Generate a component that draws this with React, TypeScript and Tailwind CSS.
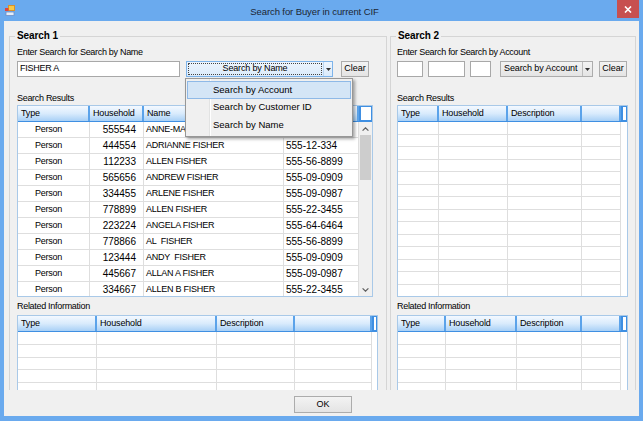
import React from "react";

type Col = { w: string; label: string; cell?: string };

const resultCols: Col[] = [
  { w: "w-[72px]", label: "Type", cell: "pl-[17px]" },
  { w: "w-[54px]", label: "Household", cell: "justify-end pr-[7px] text-[10px] tracking-normal" },
  { w: "w-[140px]", label: "Name", cell: "pl-[2px]" },
  { w: "w-[75px]", label: "", cell: "pl-[2px] text-[10px] tracking-normal" },
];

const result2Cols: Col[] = [
  { w: "w-[41px]", label: "Type" },
  { w: "w-[69px]", label: "Household" },
  { w: "w-[74px]", label: "Description" },
  { w: "w-[39px]", label: "" },
];

const relatedLeftCols: Col[] = [
  { w: "w-[79px]", label: "Type" },
  { w: "w-[120px]", label: "Household" },
  { w: "w-[78px]", label: "Description" },
  { w: "w-[77px]", label: "" },
];

const relatedRightCols: Col[] = [
  { w: "w-[48px]", label: "Type" },
  { w: "w-[71px]", label: "Household" },
  { w: "w-[65px]", label: "Description" },
  { w: "w-[39px]", label: "" },
];

// first row is mostly hidden behind the open drop-down
const people: string[][] = [
  ["Person", "555544", "ANNE-MA", ""],
  ["Person", "444554", "ADRIANNE FISHER", "555-12-334"],
  ["Person", "112233", "ALLEN FISHER", "555-56-8899"],
  ["Person", "565656", "ANDREW FISHER", "555-09-0909"],
  ["Person", "334455", "ARLENE FISHER", "555-09-0987"],
  ["Person", "778899", "ALLEN FISHER", "555-22-3455"],
  ["Person", "223224", "ANGELA FISHER", "555-64-6464"],
  ["Person", "778866", "AL  FISHER", "555-56-8899"],
  ["Person", "123444", "ANDY  FISHER", "555-09-0909"],
  ["Person", "445667", "ALLAN A FISHER", "555-09-0987"],
  ["Person", "334667", "ALLEN B FISHER", "555-22-3455"],
];

const blank = (n: number) => Array.from({ length: n }, () => ["", "", "", ""]);

function Header({ cols, box }: { cols: Col[]; box: string }) {
  return (
    <div className="flex h-[16px] shrink-0 border-b border-[#3f8fe2] bg-gradient-to-b from-[#f4f9ff] via-[#d9ebfc] to-[#a8d0f6]">
      {cols.map((c, i) => (
        <div
          key={i}
          className={`${c.w} flex items-center whitespace-nowrap border-r-2 border-[#5ba3ea] pl-[3px] text-[9px] tracking-[-0.15px]`}
        >
          {c.label}
        </div>
      ))}
      <div className={`${box} border border-l-2 border-[#3f8fe2] bg-white`} />
    </div>
  );
}

function ScrollBar() {
  return (
    <div className="flex w-[13px] flex-col bg-[#f0f0f0]">
      <div className="flex h-[13px] shrink-0 items-center justify-center">
        <svg width="7" height="4" viewBox="0 0 7 4">
          <path d="M0.6 3.6L3.5 0.8L6.4 3.6" stroke="#606060" strokeWidth="1.2" fill="none" />
        </svg>
      </div>
      <div className="mx-px h-[45px] shrink-0 bg-[#cdcdcd]" />
      <div className="flex-1" />
      <div className="flex h-[13px] shrink-0 items-center justify-center">
        <svg width="7" height="4" viewBox="0 0 7 4">
          <path d="M0.6 0.4L3.5 3.2L6.4 0.4" stroke="#606060" strokeWidth="1.2" fill="none" />
        </svg>
      </div>
    </div>
  );
}

function Grid({
  cols,
  box,
  rows,
  rowH,
  size,
  scroll,
}: {
  cols: Col[];
  box: string;
  rows: string[][];
  rowH: string;
  size: string;
  scroll?: boolean;
}) {
  return (
    <div className={`${size} flex shrink-0 flex-col overflow-hidden border border-[#a9c9e8] bg-white`}>
      <Header cols={cols} box={box} />
      <div className="flex min-h-0 flex-1">
        <div className="flex flex-col">
          {rows.map((r, i) => (
            <div
              key={i}
              className={`${rowH} flex shrink-0 border-b border-[#dedede] text-[9px] tracking-[-0.25px]`}
            >
              {cols.map((c, j) => (
                <div
                  key={j}
                  className={`${c.w} ${c.cell ?? ""} flex items-center overflow-hidden whitespace-pre border-r border-[#dedede]`}
                >
                  {r[j]}
                </div>
              ))}
            </div>
          ))}
        </div>
        {scroll ? <ScrollBar /> : <div className="flex-1" />}
      </div>
    </div>
  );
}

function Label({ children }: { children: React.ReactNode }) {
  return <div className="h-[11px] whitespace-nowrap text-[9px] leading-[11px] tracking-[-0.3px]">{children}</div>;
}

function TextBox({ w, children }: { w: string; children?: React.ReactNode }) {
  return (
    <div className={`${w} flex h-[16px] items-center border border-[#a8a8a8] bg-white pl-[2px] text-[9px] tracking-[-0.25px]`}>
      {children}
    </div>
  );
}

function Button({ w, children }: { w: string; children: React.ReactNode }) {
  return (
    <div
      className={`${w} flex items-center justify-center border border-[#acacac] bg-gradient-to-b from-[#f3f3f3] to-[#e4e4e4] text-[9px]`}
    >
      {children}
    </div>
  );
}

function DownArrow() {
  return (
    <svg width="5" height="3" viewBox="0 0 5 3">
      <path d="M0 0h5L2.5 3z" fill="#333" />
    </svg>
  );
}

function Group({ title, w, pad, children }: { title: string; w: string; pad: string; children: React.ReactNode }) {
  return (
    <fieldset className={`${w} m-0 h-[362px] min-w-0 shrink-0 border border-b-0 border-[#d5d5d5] p-0`}>
      <legend className="ml-[5px] px-[2px] text-[10px] font-bold leading-[12px] tracking-[-0.1px]">{title}</legend>
      <div className={`${pad} flex flex-col`}>{children}</div>
    </fieldset>
  );
}

export default function App() {
  return (
    <div className="flex h-[421px] w-[643px] flex-col bg-[#6aaaee] font-['Liberation_Sans',Arial,sans-serif] text-black">
      {/* Title bar */}
      <div className="flex h-[21px] shrink-0 items-start">
        <div className="w-[20px] pl-[5px] pt-[5px]">
          <svg width="10" height="11" viewBox="0 0 10 11">
            <rect x="3.5" y="0.5" width="6" height="5" fill="#f7c948" stroke="#d9912b" />
            <rect x="0" y="3" width="3.5" height="3" fill="#e0463c" />
            <rect x="1" y="7" width="8" height="3.5" fill="#e4edf8" stroke="#6c8fc7" strokeWidth="0.8" />
          </svg>
        </div>
        <div className="flex-1 whitespace-nowrap pr-[8px] pt-[6px] text-center text-[9.5px] leading-[12px] tracking-[-0.1px] text-[#1c2633]">
          Search for Buyer in current CIF
        </div>
        <div className="mr-[4px] flex h-[18px] w-[22px] items-center justify-center bg-[#c75050]">
          <svg width="8" height="7" viewBox="0 0 8 7">
            <path d="M1 0.5L7 6.5M7 0.5L1 6.5" stroke="white" strokeWidth="1.6" />
          </svg>
        </div>
      </div>

      {/* Client area */}
      <div className="mx-[4px] mb-[5px] flex flex-1 flex-col bg-[#f0f0f0]">
        <div className="flex h-[369px] shrink-0 items-start gap-[3px] overflow-hidden pl-[5px] pt-[9px]">
          {/* Search 1 */}
          <Group title="Search 1" w="w-[378px]" pad="pl-[7px]">
            <div className="mt-[5px]">
              <Label>Enter Search for Search by Name</Label>
            </div>
            <div className="mt-[3px] flex h-[16px] items-stretch">
              <TextBox w="w-[163px]">FISHER A</TextBox>
              <div className="relative ml-[6px] flex w-[147px] border border-[#7eb4ea] bg-gradient-to-b from-[#eef5fd] to-[#dbebfb]">
                <div className="m-px flex flex-1 items-center justify-center border border-dotted border-[#444] text-[9px] tracking-[-0.15px]">
                  Search by Name
                </div>
                <div className="flex w-[9px] items-center justify-center border-l border-[#b9d6f3]">
                  <DownArrow />
                </div>
                {/* open list */}
                <div className="absolute left-[-2px] top-[16px] z-10 w-[168px] border border-[#979797] bg-[#f0f0f0] px-px py-[2px] text-[9.5px] shadow-[2px_2px_3px_rgba(0,0,0,0.35)]">
                  <div className="absolute bottom-0 left-[23px] top-0 w-px bg-[#e2e3e3]" />
                  <div className="absolute bottom-0 left-[24px] top-0 w-px bg-white" />
                  <div className="relative flex h-[17.5px] items-center whitespace-nowrap border border-[#8fb9e7] bg-[#d4e5f6] pl-[25px]">
                    Search by Account
                  </div>
                  <div className="relative flex h-[17.5px] items-center whitespace-nowrap border border-transparent pl-[25px]">
                    Search by Customer ID
                  </div>
                  <div className="relative flex h-[17.5px] items-center whitespace-nowrap border border-transparent pl-[25px]">
                    Search by Name
                  </div>
                </div>
              </div>
              <div className="ml-[8px] flex">
                <Button w="w-[28px]">Clear</Button>
              </div>
            </div>
            <div className="mt-[16px]">
              <Label>Search Results</Label>
            </div>
            <div className="mt-[1px]">
              <Grid cols={resultCols} box="w-[13px]" rows={people} rowH="h-[16px]" size="w-[356px] h-[192px]" scroll />
            </div>
            <div className="mt-[4px]">
              <Label>Related Information</Label>
            </div>
            <div className="mt-[3px]">
              <Grid cols={relatedLeftCols} box="w-[5px]" rows={blank(7)} rowH="h-[12.75px]" size="w-[361px] h-[100px]" />
            </div>
          </Group>

          {/* Search 2 */}
          <Group title="Search 2" w="w-[246px]" pad="pl-[6px]">
            <div className="mt-[5px]">
              <Label>Enter Search for Search by Account</Label>
            </div>
            <div className="mt-[3px] flex h-[16px] items-stretch">
              <TextBox w="w-[26px]" />
              <div className="ml-[5px] flex">
                <TextBox w="w-[37px]" />
              </div>
              <div className="ml-[5px] flex">
                <TextBox w="w-[21px]" />
              </div>
              <div className="ml-[9px] flex w-[93px] border border-[#acacac] bg-gradient-to-b from-[#f3f3f3] to-[#e4e4e4]">
                <div className="flex flex-1 items-center whitespace-nowrap pl-[3px] text-[9px] tracking-[-0.1px]">
                  Search by Account
                </div>
                <div className="flex w-[10px] items-center justify-center border-l border-[#bcbcbc]">
                  <DownArrow />
                </div>
              </div>
              <div className="ml-[6px] flex">
                <Button w="w-[28px]">Clear</Button>
              </div>
            </div>
            <div className="mt-[16px]">
              <Label>Search Results</Label>
            </div>
            <div className="mt-[1px]">
              <Grid cols={result2Cols} box="w-[6px]" rows={blank(15)} rowH="h-[12.5px]" size="w-[231px] h-[192px]" />
            </div>
            <div className="mt-[4px]">
              <Label>Related Information</Label>
            </div>
            <div className="mt-[3px]">
              <Grid cols={relatedRightCols} box="w-[6px]" rows={blank(7)} rowH="h-[12.75px]" size="w-[231px] h-[100px]" />
            </div>
          </Group>
        </div>

        {/* Footer */}
        <div className="flex justify-center pl-[3px] pt-[6px]">
          <div className="flex h-[17px]">
            <Button w="w-[58px]">OK</Button>
          </div>
        </div>
      </div>
    </div>
  );
}
